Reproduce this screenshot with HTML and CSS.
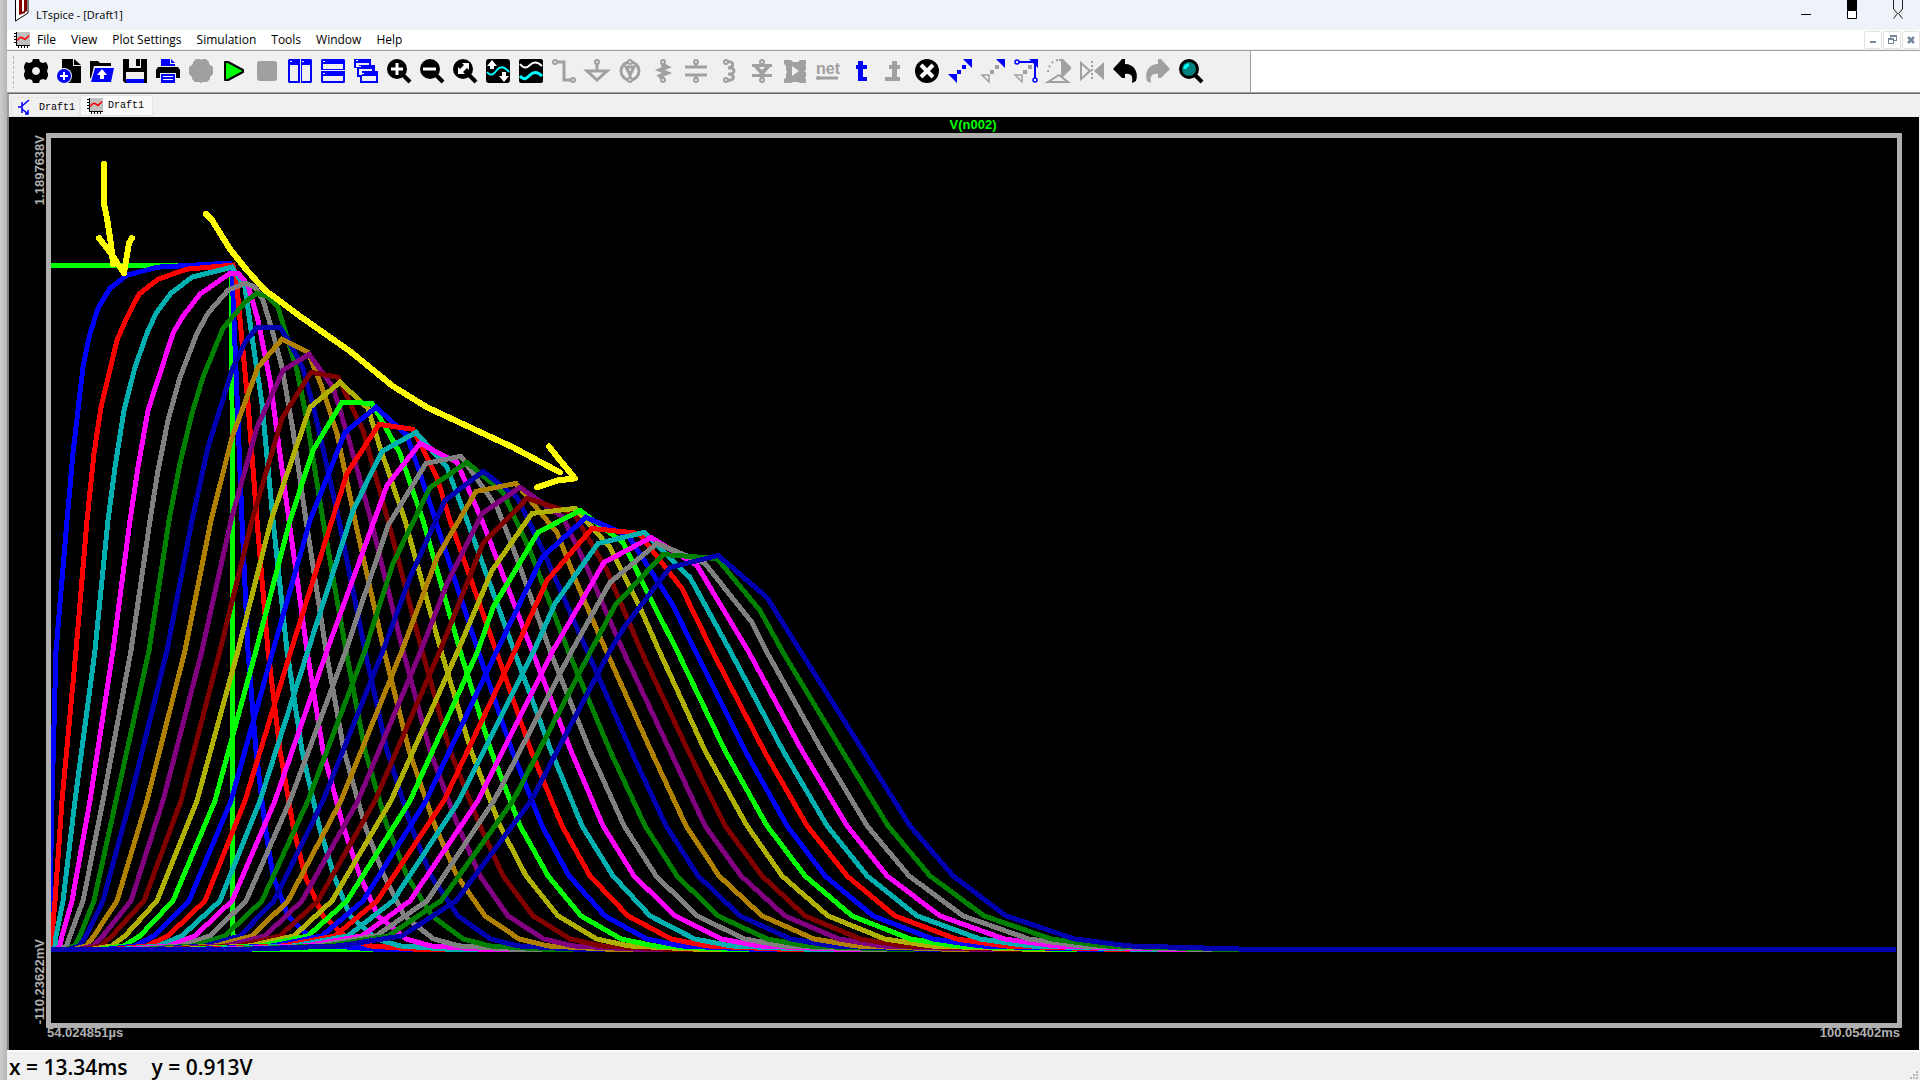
FILE: index.html
```html
<!DOCTYPE html>
<html lang="en">
<head>
<meta charset="utf-8">
<title>LTspice - [Draft1]</title>
<link rel="stylesheet" href="styles.css">
</head>
<body>
<svg class="defs" width="0" height="0" aria-hidden="true">
  <symbol id="plot-doc" viewBox="0 0 16 16">
    <path fill="#c0c0c0" d="M2 0h14v13H2z"/>
    <path fill="#000" d="M2 0h1v13h13v1H2zM0 1h2v1H0zM0 4h2v1H0zM0 7h2v1H0zM0 10h2v1H0zM4 14h1v2H4zM7 14h1v2H7zM10 14h1v2h-1zM13 14h1v2h-1z"/>
    <path fill="none" stroke="#f00" stroke-width="1.6" d="M3 8.500l3-3h2l3 2 4-4"/>
  </symbol>
</svg>
<div class="window">
  <header class="titlebar">
    <svg class="app-icon" viewBox="0 0 14 22" width="14" height="22"><path fill="#fff" stroke="#000" d="M.5-1v22L13 13V-1"/><path fill="#800000" d="M4 0h3v12l2-1V0h3v11l-2 1v1l-6 2v-1z"/></svg>
    <h1 class="title">LTspice - [Draft1]</h1>
    <div class="window-buttons">
      <button class="win-btn" aria-label="Minimize"><svg viewBox="0 0 12 20" width="12" height="20"><path d="M1 14.500h10" stroke="#000"/></svg></button>
      <button class="win-btn" aria-label="Maximize"><svg viewBox="0 0 12 20" width="12" height="20"><path fill="#000" d="M1 0h10v10H1z"/><path fill="#fff" stroke="#000" d="M1.500 10.500h9v8h-9z"/></svg></button>
      <button class="win-btn" aria-label="Close"><svg viewBox="0 0 12 20" width="12" height="20"><path fill="#e6e6e6" stroke="#222" d="M1.500-1v10l4 4.500-4 5M10.500-1v10l-4 4.500 4 5"/></svg></button>
    </div>
  </header>
  <nav class="menubar">
    <svg class="doc-icon" width="16" height="16"><use href="#plot-doc"/></svg>
    <button class="menu">File</button>
    <button class="menu">View</button>
    <button class="menu">Plot Settings</button>
    <button class="menu">Simulation</button>
    <button class="menu">Tools</button>
    <button class="menu">Window</button>
    <button class="menu">Help</button>
    <div class="mdi-buttons">
      <button class="mdi-btn" aria-label="Minimize document"><svg viewBox="0 0 10 10" width="10" height="10"><path fill="#778899" d="M2 6h6v2H2z"/></svg></button>
      <button class="mdi-btn" aria-label="Restore document"><svg viewBox="0 0 10 10" width="10" height="10"><path fill="#778899" d="M3 0h7v6H7v3H1V3h2zM4 2v1h3v2h2V2zM2 5v3h4V5z" fill-rule="evenodd"/></svg></button>
      <button class="mdi-btn" aria-label="Close document"><svg viewBox="0 0 10 10" width="10" height="10"><path stroke="#778899" stroke-width="2.500" d="M2 2l6 6M8 2L2 8"/></svg></button>
    </div>
  </nav>
  <div class="toolbar-row">
    <div class="toolbar" role="toolbar">
      <span class="handle"></span>
      <button class="tool" aria-label="Settings"><svg viewBox="0 0 24 24"><path fill-rule="evenodd" d="M9 0h6l1 3 3 1 3-1 2 4v2l-1 3 1 3v2l-2 4-3-1-3 1-1 3H9l-1-3-3-1-3 1-2-4v-2l1-3-1-3V7l2-4 3 1 3-1zM12 8a4 4 0 1 0 .01 0z"/></svg></button>
      <button class="tool" aria-label="New schematic"><svg viewBox="0 0 24 24"><path d="M5 0h11v7h8v17H5z"/><path d="M17 0l7 6h-7z"/><circle cx="7" cy="17" r="8" fill="#f0f0f0"/><circle cx="7" cy="17" r="7" fill="#00f"/><path stroke="#fff" stroke-width="2" d="M7 13v8M3 17h8"/></svg></button>
      <button class="tool" aria-label="Open"><svg viewBox="0 0 24 24"><path d="M0 2h8l2 2h11v3H4L1 19H0z"/><path fill="#00f" d="M5 9h19l-3 14H1z"/><path fill="#fff" d="M12 10l5 6h-3v4h-4v-4H7z"/></svg></button>
      <button class="tool" aria-label="Save"><svg viewBox="0 0 24 24"><path d="M0 0h24v24H2l-2-2z"/><path fill="#f0f0f0" d="M6 0h12v9H6zM3 13h18v7H3z"/><path d="M13 0h4v7h-4z"/><path fill="#00f" d="M3 20h18v4H3z"/></svg></button>
      <button class="tool" aria-label="Print"><svg viewBox="0 0 24 24"><path fill="#00f" d="M5 0h9v5h5v2H5zM15 0l4 4h-4z"/><path d="M2 8h20l2 3v8h-4v-5H4v5H0v-8z"/><path fill="#00f" d="M5 15h14v9H5z"/><path stroke="#fff" d="M7 17.500h10M7 20.500h10"/></svg></button>
      <button class="tool" aria-label="Halt settings"><svg viewBox="0 0 24 24"><path class="off" d="M7 0h4l1 1 1-1h4l3 3v2l4 3v7l-3 3v2l-3 3h-4l-2 1-2-1H6l-3-3v-2l-3-3V8l4-3V3z"/></svg></button>
      <button class="tool" aria-label="Run"><svg viewBox="0 0 24 24"><path fill="#0f0" stroke="#000" stroke-width="2" stroke-linejoin="round" d="M3 3h3l15 8v2L6 21H3z"/></svg></button>
      <button class="tool" aria-label="Stop"><svg viewBox="0 0 24 24"><rect class="off" x="2" y="2" width="20" height="20" rx="3"/></svg></button>
      <button class="tool" aria-label="Tile vertically"><svg viewBox="0 0 24 24"><path fill="#00f" d="M1 0h22l1 1v22l-1 1H1l-1-1V1z"/><path fill="#f0f0f0" d="M2 6h8v16H2zM14 6h8v16h-8z"/><path stroke="#fff" d="M2 2.500h2M14 2.500h2"/><path stroke="#f0f0f0" d="M12.500 0v24"/></svg></button>
      <button class="tool" aria-label="Tile horizontally"><svg viewBox="0 0 24 24"><path fill="#00f" d="M1 0h22l1 1v22l-1 1H1l-1-1V1z"/><path fill="#f0f0f0" d="M2 5h20v5H2zM2 17h20v5H2z"/><path stroke="#fff" d="M2 2.500h2M2 14.500h2"/><path stroke="#f0f0f0" d="M0 11.500h24"/></svg></button>
      <button class="tool" aria-label="Cascade"><svg viewBox="0 0 24 24"><path fill="#00f" d="M0 0h17v6h4v6h3v12H6v-6H3V9H0z"/><path fill="#f0f0f0" d="M2 4h13v2H5v2H2zM5 10h13v2H8v4H5zM8 17h14v5H8z"/><path stroke="#fff" d="M2 1.500h2M5 7.500h2M8 14.500h2"/></svg></button>
      <button class="tool" aria-label="Zoom in"><svg viewBox="0 0 24 24"><circle cx="10" cy="10" r="10"/><path stroke="#000" stroke-width="4" d="M15 15l8 8"/><path stroke="#fff" stroke-width="3" d="M10 4v12M4 10h12"/></svg></button>
      <button class="tool" aria-label="Zoom out"><svg viewBox="0 0 24 24"><circle cx="10" cy="10" r="10"/><path stroke="#000" stroke-width="4" d="M15 15l8 8"/><path stroke="#fff" stroke-width="3" d="M3 10h13"/></svg></button>
      <button class="tool" aria-label="Zoom to fit"><svg viewBox="0 0 24 24"><circle cx="10" cy="10" r="10"/><path stroke="#000" stroke-width="4" d="M15 15l8 8"/><path fill="#fff" d="M9 4h7v7l-2-2-4 4 2 2H5V8l2 2 4-4z"/></svg></button>
      <button class="tool" aria-label="Autorange"><svg viewBox="0 0 24 24"><rect width="24" height="24" rx="3"/><path fill="none" stroke="#0ff" stroke-width="2" d="M1 13c4 5 7 2 10-2s7-4 12 2"/><path fill="#fff" d="M6 1l5 6H8v3H4V7H1zM18 23l-5-6h3v-4h4v4h3z"/></svg></button>
      <button class="tool" aria-label="Plot panes"><svg viewBox="0 0 24 24"><rect width="24" height="24" rx="2"/><path fill="none" stroke="#fff" stroke-width="2" d="M1 5c4 5 7 4 10 1s7-4 12 1"/><path fill="none" stroke="#0ff" stroke-width="3" d="M1 17c4 5 7 2 10-1s7-4 12 1"/></svg></button>
      <button class="tool" aria-label="Wire"><svg viewBox="0 0 24 24"><path class="off-line" stroke-width="3" d="M3 3h9v18h8"/><circle class="off-ring" cx="3" cy="3" r="2"/><circle class="off-ring" cx="21" cy="21" r="2"/></svg></button>
      <button class="tool" aria-label="Ground"><svg viewBox="0 0 24 24"><path class="off-line" stroke-width="3" d="M12 4v8M2 12h20l-10 9z"/><circle class="off-ring" cx="12" cy="3" r="2"/></svg></button>
      <button class="tool" aria-label="Voltage source"><svg viewBox="0 0 24 24"><circle class="off-line" stroke-width="3" cx="12" cy="12" r="9"/><path class="off-line" stroke-width="3" d="M8 8l4 8 4-8zM12 12v7"/><circle class="off-ring" cx="12" cy="3" r="2"/><circle class="off-ring" cx="12" cy="21" r="2"/></svg></button>
      <button class="tool" aria-label="Resistor"><svg viewBox="0 0 24 24"><path class="off-line" stroke-width="4" d="M12 4v2l4 2-7 3 7 3-7 3 3 3"/><circle class="off-ring" cx="12" cy="3" r="2"/><circle class="off-ring" cx="12" cy="21" r="2"/></svg></button>
      <button class="tool" aria-label="Capacitor"><svg viewBox="0 0 24 24"><path class="off-line" stroke-width="3" d="M1 8h22M1 16h22M12 4v4M12 16v4"/><circle class="off-ring" cx="12" cy="3" r="2"/><circle class="off-ring" cx="12" cy="21" r="2"/></svg></button>
      <button class="tool" aria-label="Inductor"><svg viewBox="0 0 24 24"><path class="off-line" stroke-width="3" d="M9 3c8-2 9 5 2 6 8-1 8 6 0 6 8 0 7 8-2 6"/><circle class="off-ring" cx="9" cy="3" r="2"/><circle class="off-ring" cx="9" cy="21" r="2"/></svg></button>
      <button class="tool" aria-label="Diode"><svg viewBox="0 0 24 24"><path class="off" d="M2 5h20v3h-2l-6 7h8v3H2v-3h8L4 8H2z"/><path class="off-line" stroke-width="3" d="M12 4v16"/><path fill="#f0f0f0" d="M9 8h6l-3 3z"/><circle class="off-ring" cx="12" cy="3" r="2"/><circle class="off-ring" cx="12" cy="21" r="2"/></svg></button>
      <button class="tool" aria-label="Component"><svg viewBox="0 0 24 24"><path class="off" d="M1 1h7l2 2h5l2-2h6v4l-1 2h1v4l-2 1 2 1v4l-1 2 1 1v4h-6l-2-1h-5l-2 1H1v-4l2-1v-4l1-2-1-2V7L1 5z"/><path fill="#f0f0f0" d="M9 7l7 5-7 5z"/></svg></button>
      <button class="tool" aria-label="Label net"><svg viewBox="0 0 24 24"><text class="glyph off" x="12" y="15" font-size="16" text-anchor="middle">net</text><path class="off-line" stroke-width="3" d="M2 19h20"/><circle class="off" cx="2" cy="19" r="2"/></svg></button>
      <button class="tool" aria-label="Text"><svg viewBox="0 0 24 24"><path fill="#00f" d="M9 2h5v4h4v4h-4v8h4v4H9V10H7V6h2z"/></svg></button>
      <button class="tool" aria-label="SPICE directive"><svg viewBox="0 0 24 24"><path class="off" d="M10 2h5v4h3v4h-3v8h3v4h-8V10H7V6h3z"/><path class="off" d="M3 18h8v4H3z"/></svg></button>
      <button class="tool" aria-label="Delete"><svg viewBox="0 0 24 24"><circle cx="12" cy="12" r="12"/><path stroke="#fff" stroke-width="4" d="M6 6l12 12M18 6L6 18"/></svg></button>
      <button class="tool" aria-label="Duplicate"><svg viewBox="0 0 24 24"><path fill="#00f" d="M15 0h9v9zM0 15h9v9zM14 6h4v4h-4zM9 11h4v4H9z"/></svg></button>
      <button class="tool" aria-label="Move"><svg viewBox="0 0 24 24"><path fill="#00f" d="M15 0h9v9z"/><path class="off" d="M14 6h4v4h-4zM9 11h4v4H9z"/><path class="off-line" stroke-width="1.500" d="M1 16h7v7z"/></svg></button>
      <button class="tool" aria-label="Drag"><svg viewBox="0 0 24 24"><path class="off" d="M14 6h4v4h-4zM9 11h4v4H9z"/><path class="off-line" stroke-width="1.500" d="M1 16h7v7z"/><path fill="#00f" d="M15 0h9v9z"/><path fill="none" stroke="#00f" stroke-width="2" d="M5 3h14M21 5v14"/><circle fill="#f0f0f0" stroke="#00f" stroke-width="1.500" cx="3" cy="3" r="2"/><circle fill="#f0f0f0" stroke="#00f" stroke-width="1.500" cx="21" cy="21" r="2"/></svg></button>
      <button class="tool" aria-label="Rotate"><svg viewBox="0 0 24 24"><path class="off" d="M12 0h4l8 8v2l-8 8h-2V2h-2z"/><path class="off-line" stroke-width="2" d="M12 16l9 7H1z"/><path class="off-line" stroke-width="2" stroke-dasharray="2 3" d="M11 1C5 2 1 7 1 15"/></svg></button>
      <button class="tool" aria-label="Mirror"><svg viewBox="0 0 24 24"><path class="off-line" stroke-width="2" d="M1 4l9 8-9 8z"/><path class="off" d="M24 3v18l-10-9z"/><path class="off-line" stroke-width="2" stroke-dasharray="2 2" d="M12 2v20"/></svg></button>
      <button class="tool" aria-label="Undo"><svg viewBox="0 0 24 24"><path d="M9 0h3v5c9 0 14 8 11 17l-4 2c1-6 0-10-7-9v4H9L0 10z"/></svg></button>
      <button class="tool" aria-label="Redo"><svg viewBox="0 0 24 24"><path class="off" d="M15 0h-3v5C3 5-2 13 1 22l4 2c-1-6 0-10 7-9v4h3l9-9z"/></svg></button>
      <button class="tool" aria-label="Find"><svg viewBox="0 0 24 24"><circle cx="10" cy="10" r="8.500" fill="#008080" stroke="#000" stroke-width="3"/><path stroke="#000" stroke-width="4" d="M16 16l7 7"/><path fill="none" stroke="#0ff" stroke-width="3" d="M6 10c0-3 2-4 4-4"/></svg></button>
    </div>
  </div>
  <div class="tabs" role="tablist">
    <button class="tab" role="tab" aria-selected="false"><svg width="16" height="16" viewBox="0 0 16 16"><path fill="none" stroke="#00f" stroke-width="1.500" d="M4 3v11M0 8h4M4 7l7-6M4 10l6 5M10 11v4H7"/></svg>Draft1</button>
    <button class="tab tab-active" role="tab" aria-selected="true"><svg width="16" height="16"><use href="#plot-doc"/></svg>Draft1</button>
  </div>
  <main class="plot">
    <div class="trace-name">V(n002)</div>
    <div class="y-axis"><span>1.1897638V</span><span>-110.23622mV</span></div>
    <div class="frame">
      <svg class="chart" viewBox="51 138 1846 884" preserveAspectRatio="none">
        <g id="traces" class="traces"></g>
        <g class="ink">
          <path d="M104 164V204L107 218L111 244L113 264"/>
          <path d="M99 238L110 252L124 273L129 243L132 238"/>
          <path d="M206 214L212 220L230 249L246 269L265 290L300 316L350 351L393 386L427 407L470 427L513 447L560 472"/>
          <path d="M549 446L560 460L575 478L558 480L537 487"/>
        </g>
      </svg>
    </div>
    <div class="x-axis"><span>54.024851µs</span><span>100.05402ms</span></div>
  </main>
  <footer class="statusbar">
    <span>x = 13.34ms</span><span>y = 0.913V</span>
    <svg class="grip" width="10" height="10" viewBox="0 0 10 10"><path fill="#b8b8b8" d="M7 1h2v2H7zM4 4h2v2H4zM7 4h2v2H7zM1 7h2v2H1zM4 7h2v2H4zM7 7h2v2H7z"/></svg>
  </footer>
</div>
<script src="traces.js"></script>
</body>
</html>
```
FILE: styles.css
```css
* { box-sizing: border-box; }
body {
  margin: 0;
  min-height: 100vh;
  padding-left: 7px;
  display: flex;
  background: linear-gradient(to right, #cdcdcd, #b4b4b4 7px);
  font-family: "Open Sans", "Noto Sans", sans-serif;
  font-size: 12px;
  color: #000;
}
button { margin: 0; padding: 0; border: 0; background: none; font: inherit; color: inherit; }
svg { display: block; }
.defs { position: absolute; }
.window { flex: 1; display: flex; flex-direction: column; background: #f0f0f0; }

.titlebar { display: flex; align-items: flex-start; height: 30px; padding: 0 16px 0 8px; background: #eef3f9; }
.title { margin: 0 0 0 7px; padding-top: 7px; font-size: 11px; font-weight: 400; line-height: 16px; }
.window-buttons { display: flex; gap: 34px; margin-left: auto; }

.menubar { display: flex; align-items: center; gap: 15px; height: 20px; padding-left: 7px; background: #fff; border-bottom: 1px solid #f0f0f0; }
.menu { font-size: 12px; line-height: 18px; }
.doc-icon { margin-right: -8px; }
.mdi-buttons { display: flex; gap: 1px; margin-left: auto; }
.mdi-btn { display: grid; place-items: center; width: 18px; height: 18px; border: 1px solid #e2e2e2; border-radius: 2px; }

.toolbar-row { height: 43px; background: #fff; border-top: 1px solid #a0a0a0; border-bottom: 1px solid #a0a0a0; }
.toolbar { display: flex; align-items: center; gap: 9px; width: max-content; height: 100%; padding: 0 47px 1px 5px; background: #f0f0f0; border-right: 1px solid #a0a0a0; }
.handle { width: 3px; height: 33px; background: radial-gradient(#b4b4b4 1px, transparent 1px) 0 0 / 3px 5px; }
.tool { width: 24px; height: 24px; }
.tool svg { width: 24px; height: 24px; overflow: visible; }
.off { fill: #a0a0a0; }
.off-line { fill: none; stroke: #a0a0a0; }
.off-ring { fill: #f0f0f0; stroke: #a0a0a0; stroke-width: 2px; }
.glyph { font-family: "Liberation Sans", sans-serif; font-weight: 700; }

.tabs { display: flex; height: 24px; padding-left: 2px; border-top: 1px solid #696969; border-left: 2px solid #a0a0a0; align-items: flex-start; }
.tab { display: flex; align-items: center; gap: 5px; width: 69px; height: 20px; margin-top: 3px; padding-left: 6px; border: 1px solid #e4e4e4; font-family: "Liberation Mono", monospace; font-size: 10px; }
.tab-active { width: 73px; margin-top: 1px; height: 21px; background: #fafafa; }

.plot {
  flex: 1;
  display: grid;
  grid-template-columns: 37px 1fr;
  grid-template-rows: 16px 1fr 22px;
  margin-right: 1px;
  padding-right: 17px;
  background: #000;
  border-left: 2px solid #808080;
  color: #b0b0b0;
  font: 700 13px/16px "Liberation Sans", Arial, sans-serif;
}
.trace-name { grid-column: 2; text-align: center; color: #0f0; line-height: 16px; padding-right: 2px; }
.y-axis { grid-row: 2; display: flex; flex-direction: column; justify-content: space-between; align-items: flex-end; padding: 2px 0 4px; }
.y-axis span { writing-mode: vertical-rl; transform: rotate(180deg); line-height: 12px; }
.frame { grid-row: 2; display: grid; border: 5px solid #b0b0b0; border-radius: 1px; min-height: 0; }
.chart { width: 100%; height: 100%; min-height: 0; }
.x-axis { grid-column: 2; display: flex; justify-content: space-between; padding: 0 2px 0 1px; line-height: 10px; }
.traces { fill: none; stroke-width: 5px; shape-rendering: crispEdges; }
.ink { fill: none; stroke: #ff0; stroke-width: 6px; stroke-linecap: round; stroke-linejoin: round; shape-rendering: crispEdges; }

.statusbar { display: flex; align-items: center; gap: 24px; height: 30px; padding: 2px 1px 0 2px; border-top: 2px solid #fff; font-size: 21px; font-weight: 600; line-height: 24px; }
.grip { margin-left: auto; align-self: flex-end; }
```
FILE: traces.js
```javascript
// Node voltages of the delay line: stage 0 is the source pulse.
const COLORS = ["#00ff00", "#0000ff", "#ff0000", "#00b0b0", "#ff00ff", "#808080",
  "#008000", "#0000b0", "#b08000", "#800080", "#800000", "#b0b000"];

// Rising edge: x of each stage (1..31) at a fixed y.
const RISE = {
  935: [50,52,56,62,70,80,86,94,103,112,125,140,154,168,182,195,210,225,240,252,265,280,294,308,322,335,348,362,376,388,402],
  900: [50,55,63,72,83,94,103,117,131,144,157,173,189,205,220,232,246,262,274,288,302,318,332,347,363,377,393,410,427,441,456],
  800: [52,62,75,90,103,116,130,147,163,181,197,215,231,245,260,275,290,308,323,341,358,375,391,410,426,444,459,478,494,513,531],
  650: [56,76,95,113,131,149,167,185,202,220,238,256,273,291,308,327,346,365,383,402,421,440,458,478,497,515,534,553,572,591,610]
};
// Points round the top of each pulse.
const CROWN = [
  [67,520,73,453,83,367,89,337,98,308,110,288,127,275,158,267,230,263,232,270,242,520],
  [87,520,94,453,101,407,117,340,127,317,139,294,158,279,187,269,233,265,236,277,248,403,257,520],
  [108,520,115,467,124,410,135,367,147,333,156,313,171,293,192,277,232,267,245,287,253,343,262,403,273,520],
  [130,520,138,467,148,410,162,367,173,333,183,316,200,294,230,273,238,273,248,285,258,320,270,380,289,520],
  [150,520,158,470,168,420,180,377,197,333,208,313,228,290,245,283,255,287,263,300,273,333,282,367,293,430,306,520],
  [169,520,180,463,192,413,203,377,223,328,245,302,257,293,267,296,278,307,287,337,297,370,307,420,323,520],
  [192,520,208,447,232,370,245,342,257,327,280,327,290,343,303,368,315,413,339,520],
  [211,520,232,437,258,367,282,339,308,352,322,387,337,433,355,520],
  [231,520,257,427,283,370,309,354,333,387,350,443,371,520],
  [252,520,282,418,311,372,338,377,363,430,388,520],
  [271,520,310,407,340,382,368,408,380,447,405,520],
  [290,520,313,450,342,402,372,403,400,453,423,520],
  [310,520,345,432,376,407,407,435,428,497],
  [332,520,347,473,379,424,413,429,437,477,450,520],
  [353,510,382,451,416,432,447,467,467,520],
  [387,485,420,443,457,462,482,520],
  [388,525,426,463,461,456,497,507,513,547],
  [393,563,430,487,467,462,503,492,530,550],
  [410,577,445,500,483,471,517,497,543,550],
  [437,557,476,491,516,483,557,532,577,583],
  [447,583,482,513,520,487,563,517,587,567],
  [483,543,527,498,574,513,607,570],
  [492,570,532,513,575,508,610,547,640,607],
  [493,607,538,532,580,510,623,542,653,603],
  [542,557,586,517,628,535,672,603],
  [547,580,592,528,639,533,682,588],
  [555,603,598,543,644,532,690,577],
  [604,562,651,537,697,565,730,620],
  [610,582,657,543,705,563,752,622],
  [615,605,663,554,717,558,760,610],
  [624,627,670,567,718,555,767,597]
];
// Falling edge: x of each stage at a fixed y.
const FALL = {
  650: [248,268,287,307,326,346,365,384,403,422,441,460,478,496,514,532,550,568,587,606,623,641,659,677,695,712,730,748,766,782,800],
  750: [256,280,302,323,344,365,387,409,430,450,471,491,512,531,551,571,590,610,631,651,670,688,705,725,745,764,783,802,822,842,863],
  825: [265,293,319,343,365,387,411,435,458,480,500,520,542,562,582,603,624,645,666,686,705,725,747,767,787,807,827,847,867,888,910],
  875: [273,305,334,360,384,407,431,457,480,503,526,548,569,590,613,634,656,677,698,719,741,762,782,805,825,847,867,887,909,930,953],
  915: [288,323,350,378,404,432,458,485,508,533,558,581,605,628,650,675,697,718,740,762,785,805,828,852,873,895,917,940,963,984,1006]
};
const BASE = 949;
const END = 1896;

function stage(n) {
  const i = n - 1;
  const low = RISE[935][i] - 50;
  const tail = FALL[915][i] + 22 + 1.5 * n;
  const settle = tail + 20 + 1.1 * n;
  const p = [51, BASE, 50 + low * 0.5, BASE, 50 + low * 0.82, 945];
  for (const y of [935, 900, 800, 650]) p.push(RISE[y][i], y);
  p.push(...CROWN[i]);
  for (const y of [650, 750, 825, 875, 915]) p.push(FALL[y][i], y);
  p.push(tail, 938, settle, 945, settle + 50 + 3 * n, BASE, END, BASE);
  return p;
}

const group = document.getElementById("traces");
function draw(points, color) {
  const line = document.createElementNS("http://www.w3.org/2000/svg", "polyline");
  line.setAttribute("points", points.join(" "));
  line.setAttribute("stroke", color);
  group.appendChild(line);
}
draw([51, 265, 231, 265, 232, 400, 233, 933, 236, BASE, END, BASE], COLORS[0]);
for (let n = 1; n <= CROWN.length; n++) draw(stage(n), COLORS[n % COLORS.length]);
```
